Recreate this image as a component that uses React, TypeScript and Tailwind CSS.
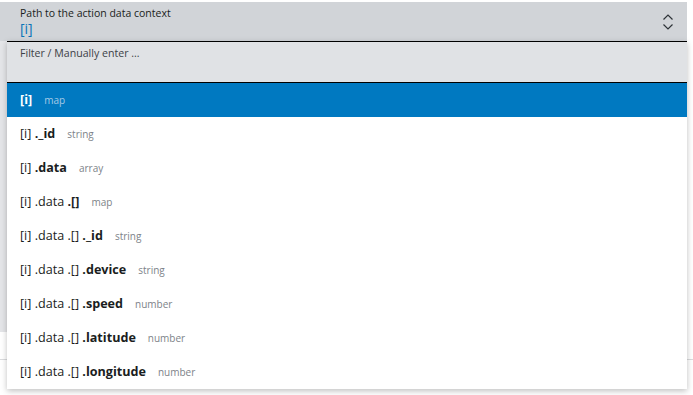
import { useState } from 'react';

interface PathItem {
  parts: string[];
  type: string;
}

const items: PathItem[] = [
  { parts: ['[i]'], type: 'map' },
  { parts: ['[i]', '._id'], type: 'string' },
  { parts: ['[i]', '.data'], type: 'array' },
  { parts: ['[i]', '.data', '.[]'], type: 'map' },
  { parts: ['[i]', '.data', '.[]', '._id'], type: 'string' },
  { parts: ['[i]', '.data', '.[]', '.device'], type: 'string' },
  { parts: ['[i]', '.data', '.[]', '.speed'], type: 'number' },
  { parts: ['[i]', '.data', '.[]', '.latitude'], type: 'number' },
  { parts: ['[i]', '.data', '.[]', '.longitude'], type: 'number' },
];

function Chevrons() {
  return (
    <svg width="12" height="18" viewBox="0 0 12 18" fill="none" className="text-[#2e3338]">
      <path d="M1.5 6.5 L6 2 L10.5 6.5" stroke="currentColor" strokeWidth="1.2" />
      <path d="M1.5 11.5 L6 16 L10.5 11.5" stroke="currentColor" strokeWidth="1.2" />
    </svg>
  );
}

export default function App() {
  const [selected, setSelected] = useState(0);

  return (
    <div className="relative w-[693px] h-[395px] bg-white overflow-hidden font-['Open_Sans',sans-serif]">
      {/* Select field */}
      <div className="mt-[2px] w-[687px] h-[39px] bg-[#d1d4d8] flex items-center justify-between pl-[20px] pr-[13px]">
        <div className="flex flex-col">
          <span className="text-[10.5px] leading-[14px] text-[#1a1d21]">Path to the action data context</span>
          <span className="text-[14px] leading-[18px] text-[#0a74b8]">[i]</span>
        </div>
        <Chevrons />
      </div>

      {/* Field below, covered by the dropdown */}
      <div className="w-[687px] h-[291px] bg-[#e4e5e8]" />
      <div className="mt-[27px] w-[693px] h-px bg-[#dadbdd]" />

      {/* Dropdown */}
      <div className="absolute left-[7px] top-[41px] w-[680px] bg-white shadow-[0_2px_6px_rgba(0,0,0,0.25)]">
        <div className="h-[42px] bg-[#e0e2e5] border-y border-black pl-[13px] pt-[4px]">
          <span className="block text-[10.6px] leading-[14px] text-[#3c4146]">Filter / Manually enter ...</span>
        </div>
        <ul>
          {items.map((item, i) => {
            const active = i === selected;
            return (
              <li
                key={i}
                onClick={() => setSelected(i)}
                className={`h-[34px] flex items-center pl-[13px] cursor-pointer ${
                  active ? 'bg-[#0079c1]' : 'bg-white'
                }`}
              >
                <span className={`text-[12.6px] ${active ? 'text-white' : 'text-[#1a1d21]'}`}>
                  {item.parts.map((p, j) => (
                    <span key={j} className={j === item.parts.length - 1 ? 'font-bold' : ''}>
                      {j > 0 ? ' ' : ''}
                      {p}
                    </span>
                  ))}
                </span>
                <span className={`ml-[12px] text-[10px] ${active ? 'text-[#a6c9e6]' : 'text-[#7d8389]'}`}>
                  {item.type}
                </span>
              </li>
            );
          })}
        </ul>
      </div>
    </div>
  );
}
